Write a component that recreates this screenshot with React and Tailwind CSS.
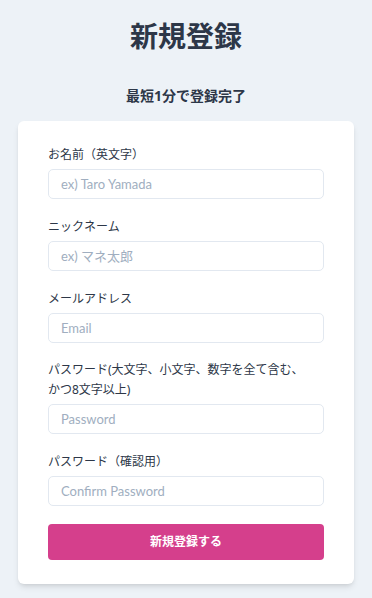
import React from "react";

const inputCls =
  "block w-full h-[30px] px-3 text-[13px] text-[#2d3748] placeholder:text-[#a0aec0] bg-white border border-[#e2e8f0] rounded-[5px] outline-none";
const inputFont = { fontFamily: 'Lato, "Noto Sans CJK JP", sans-serif' };

function Field({ label, placeholder, type = "text" }) {
  return (
    <div className="mb-[18px]">
      <label className="block text-[12px] leading-[20px] text-[#2d3748] mb-1">{label}</label>
      <input type={type} placeholder={placeholder} style={inputFont} className={inputCls} />
    </div>
  );
}

export default function App() {
  return (
    <div
      className="w-[372px] h-[598px] bg-[#edf2f7] flex flex-col items-center"
      style={{ fontFamily: '"Noto Sans", "Noto Sans CJK JP", sans-serif' }}
    >
      <h1 className="mt-[16px] h-[40px] leading-[40px] text-[28px] font-bold text-[#2d3748]">新規登録</h1>
      <p className="mt-[30px] h-[20px] leading-[20px] text-[14px] font-bold text-[#2d3748]">最短1分で登録完了</p>
      <div className="mt-[15px] w-[336px] bg-white rounded-md shadow-md px-[30px] pt-[24px] pb-[24px]">
        <Field label="お名前（英文字）" placeholder="ex) Taro Yamada" />
        <Field label="ニックネーム" placeholder="ex) マネ太郎" />
        <Field label="メールアドレス" placeholder="Email" type="email" />
        <div className="mb-[18px]">
          <label className="block text-[12px] leading-[20px] text-[#2d3748] mb-1 -mt-px">
            パスワード(大文字、小文字、数字を全て含む、
            <br />
            かつ8文字以上)
          </label>
          <input type="password" placeholder="Password" style={inputFont} className={inputCls} />
        </div>
        <Field label="パスワード（確認用）" placeholder="Confirm Password" type="password" />
        <button className="block w-full h-[36px] rounded-[4px] bg-[#d53f8c] text-white text-[12px] font-bold">
          新規登録する
        </button>
      </div>
    </div>
  );
}
